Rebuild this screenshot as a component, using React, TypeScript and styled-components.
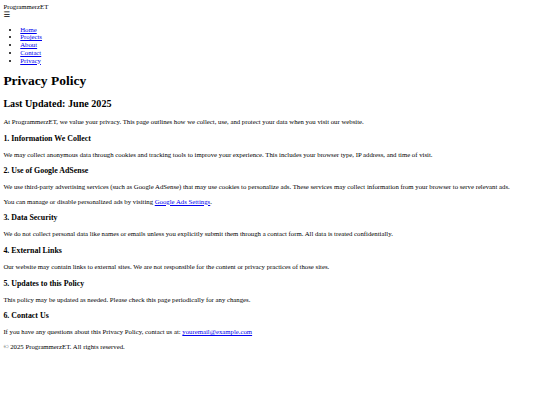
import React from 'react'
import styled, { createGlobalStyle } from 'styled-components'

// plain browser-default document, shown at 540/1280 scale
const GlobalStyle = createGlobalStyle`
  html, body {
    background: #fff;
  }

  body {
    margin: 3.375px;
    font-family: "Liberation Serif", "Times New Roman", serif;
    font-size: 6.75px;
    line-height: 1.15;
    color: #000;
  }
`

const Header = styled.header`
  display: block;
`

const Brand = styled.div`
  height: 7.76px;
  line-height: 7.76px;
`

const MenuToggle = styled.div`
  height: 7.76px;
  line-height: 7.76px;
  font-size: 7.5px;
  font-family: "DejaVu Sans", sans-serif;
`

const NavList = styled.ul`
  margin: 6.75px 0;
  padding-left: 16.875px;
  list-style: disc;
`

const NavItem = styled.li``

const Link = styled.a`
  color: #0000ee;
  text-decoration: underline;
`

const Title = styled.h1`
  font-size: 13.5px;
  font-weight: bold;
  margin: 9.045px 0;
`

const Updated = styled.h2`
  font-size: 10.125px;
  font-weight: bold;
  margin: 8.4px 0;
`

const SectionTitle = styled.h3`
  font-size: 7.9px;
  font-weight: bold;
  margin: 7.9px 0;
`

const Text = styled.p`
  margin: 6.75px 0;
`

const Footer = styled.footer`
  display: block;
`

const links = ['Home', 'Projects', 'About', 'Contact', 'Privacy']

const App = () => {
  return <>
    <GlobalStyle />
    <Header>
      <Brand>ProgrammerzET</Brand>
      <MenuToggle>☰</MenuToggle>
      <nav>
        <NavList>
          {links.map(l => <NavItem key={l}><Link href="#">{l}</Link></NavItem>)}
        </NavList>
      </nav>
    </Header>

    <main>
      <Title>Privacy Policy</Title>
      <Updated>Last Updated: June 2025</Updated>
      <Text>At ProgrammerzET, we value your privacy. This page outlines how we collect, use, and protect your data when you visit our website.</Text>

      <SectionTitle>1. Information We Collect</SectionTitle>
      <Text>We may collect anonymous data through cookies and tracking tools to improve your experience. This includes your browser type, IP address, and time of visit.</Text>

      <SectionTitle>2. Use of Google AdSense</SectionTitle>
      <Text>We use third-party advertising services (such as Google AdSense) that may use cookies to personalize ads. These services may collect information from your browser to serve relevant ads.</Text>
      <Text>You can manage or disable personalized ads by visiting <Link href="#">Google Ads Settings</Link>.</Text>

      <SectionTitle>3. Data Security</SectionTitle>
      <Text>We do not collect personal data like names or emails unless you explicitly submit them through a contact form. All data is treated confidentially.</Text>

      <SectionTitle>4. External Links</SectionTitle>
      <Text>Our website may contain links to external sites. We are not responsible for the content or privacy practices of those sites.</Text>

      <SectionTitle>5. Updates to this Policy</SectionTitle>
      <Text>This policy may be updated as needed. Please check this page periodically for any changes.</Text>

      <SectionTitle>6. Contact Us</SectionTitle>
      <Text>If you have any questions about this Privacy Policy, contact us at: <Link href="#">youremail@example.com</Link></Text>
    </main>

    <Footer>
      <Text>© 2025 ProgrammerzET. All rights reserved.</Text>
    </Footer>
  </>
}

export default App
